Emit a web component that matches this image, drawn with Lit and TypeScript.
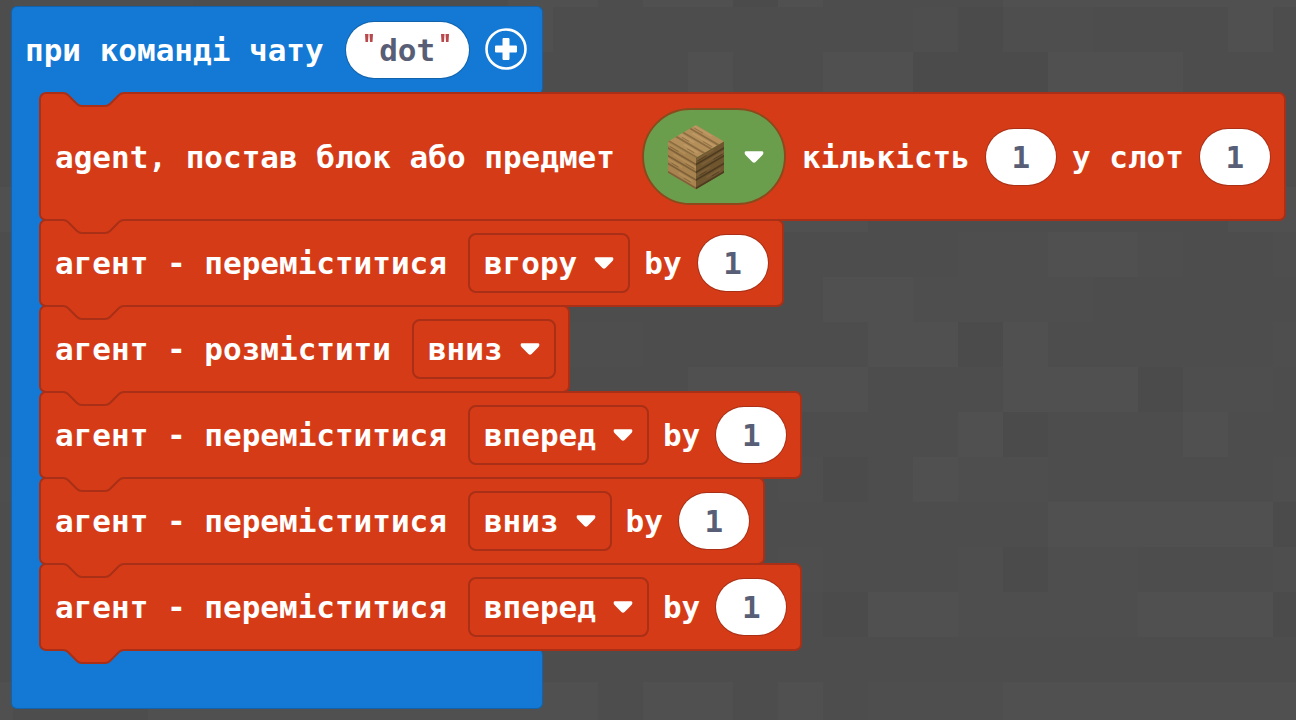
import { LitElement, html, svg, css } from "lit";
import { customElement, property } from "lit/decorators.js";

type Part =
  | { kind: "label"; text: string; lead?: boolean }
  | { kind: "number"; name: string; value: string }
  | { kind: "select"; name: string; value: string }
  | { kind: "item"; name: string };

const DIRECTIONS = ["вперед", "назад", "вліво", "вправо", "вгору", "вниз"];

const move = (direction: string): Part[] => [
  { kind: "label", text: "агент - переміститися", lead: true },
  { kind: "select", name: "напрямок", value: direction },
  { kind: "label", text: "by" },
  { kind: "number", name: "кроки", value: "1" },
];

const STATEMENTS: Part[][] = [
  [
    { kind: "label", text: "agent, постав блок або предмет", lead: true },
    { kind: "item", name: "дошки" },
    { kind: "label", text: "кількість" },
    { kind: "number", name: "кількість", value: "1" },
    { kind: "label", text: "у слот" },
    { kind: "number", name: "слот", value: "1" },
  ],
  move("вгору"),
  [
    { kind: "label", text: "агент - розмістити", lead: true },
    { kind: "select", name: "напрямок", value: "вниз" },
  ],
  move("вперед"),
  move("вниз"),
  move("вперед"),
];

// Stone texture of the workspace: [row, first column, column count, shade].
const TILE = 45;
const TILES: [number, number, number, "light" | "mild" | "dark"][] = [
  [-1, 0, 4, "mild"], [-1, 11, 2, "light"], [-1, 14, 2, "light"], [-1, 16, 1, "dark"], [-1, 17, 1, "light"], [-1, 22, 8, "light"],
  [0, 11, 1, "light"], [0, 20, 1, "mild"], [0, 21, 1, "dark"], [0, 22, 2, "mild"], [0, 27, 1, "light"],
  [1, 15, 1, "light"], [1, 18, 2, "light"], [1, 20, 3, "dark"], [1, 23, 3, "light"],
  [4, -1, 1, "light"], [4, 17, 2, "light"], [4, 27, 2, "light"],
  [5, 21, 2, "mild"], [5, 23, 2, "light"], [5, 25, 1, "mild"], [5, 28, 1, "mild"],
  [6, 18, 2, "light"], [6, 20, 4, "mild"],
  [7, 12, 2, "mild"], [7, 19, 2, "light"], [7, 21, 1, "dark"], [7, 22, 1, "light"], [7, 28, 1, "mild"],
  [8, 15, 4, "light"], [8, 22, 3, "light"], [8, 25, 1, "dark"], [8, 26, 2, "mild"],
  [9, 21, 1, "light"], [9, 22, 1, "dark"], [9, 26, 1, "light"],
  [10, -1, 1, "mild"], [10, 17, 1, "mild"], [10, 18, 1, "dark"], [10, 20, 1, "light"], [10, 21, 2, "mild"], [10, 28, 1, "mild"],
  [11, 23, 5, "light"], [11, 28, 1, "dark"],
  [12, 17, 1, "mild"], [12, 21, 1, "mild"], [12, 22, 1, "dark"], [12, 23, 2, "mild"], [12, 28, 1, "mild"],
  [13, 18, 1, "dark"], [13, 19, 2, "light"], [13, 21, 4, "mild"], [13, 25, 3, "light"], [13, 28, 1, "dark"],
  [15, -1, 1, "light"], [15, 3, 10, "light"], [15, 14, 2, "light"], [15, 17, 1, "light"], [15, 19, 3, "mild"], [15, 22, 8, "light"],
];

const arrow = html`<svg class="arrow" viewBox="0 0 20 12" aria-hidden="true">
  <path d="M2.2 0.300H17.800Q19.400 0.300 19.400 1.700Q19.400 3.200 18 4.500L11.600 11Q10 12.400 8.400 11L2 4.500Q0.600 3.200 0.600 1.700Q0.600 0.300 2.200 0.300Z" />
</svg>`;

// One face of the plank cube: seams across a 16-unit square.
const planks = (base: string, seam: string, shine: string) => svg`
  <rect width="16" height="16" fill=${base} />
  <path d="M0 1H10M3 5H16M0 9H8M6 13H14" stroke=${shine} stroke-width="1" />
  <path d="M0 3.300H16M0 7.300H16M0 11.300H16M0 15.500H16" stroke=${seam} stroke-width="1" />
  <path d="M1 2H6M10 6H15M2 10H6M9 14H13" stroke=${seam} stroke-width="0.400" />`;

const cube = html`<svg class="cube" viewBox="0 0 58 66" aria-hidden="true">
  <g transform="matrix(1.75 1.03 -1.75 1.03 29 1)">${planks("#b58f5a", "#8c6d42", "#be9963")}</g>
  <g transform="matrix(1.75 1.03 0 1.95 1 17.500)">${planks("#a8834f", "#7f6139", "#b28d58")}</g>
  <g transform="matrix(1.75 -1.03 0 1.95 29 34)">${planks("#70562f", "#4f3c20", "#7b5f39")}</g>
</svg>`;

@customElement("block-notch")
class BlockNotch extends LitElement {
  static styles = css`
    :host { position: absolute; left: 21px; top: -2px; width: 64px; height: 17px; pointer-events: none; }
    svg { display: block; width: 64px; height: 17px; }
    .fill { fill: var(--above); }
    .edge { fill: none; stroke: var(--edge); stroke-width: 2; }
  `;
  render() {
    return html`<svg viewBox="0 0 64 17" aria-hidden="true">
      <path class="fill" d="M0 0H64V1H62Q59 1 57 3L48 12.500Q46 14 43 14H20Q17 14 15 12.500L6 3Q4 1 1 1H0Z" />
      <path class="edge" d="M0 1H1Q4 1 6 3L15 12Q17 14 20 14H43Q46 14 48 12L57 3Q59 1 62 1H64" />
    </svg>`;
  }
}

@customElement("statement-block")
class StatementBlock extends LitElement {
  @property({ attribute: false }) parts: Part[] = [];

  static styles = css`
    :host {
      position: relative; display: flex; align-items: center; gap: 14px;
      width: max-content; padding: 12px 12px 12px 14px; margin-bottom: -2px;
      box-sizing: border-box; border: 2px solid var(--edge); border-radius: 7px;
      background: var(--agent);
    }
    .label { margin-right: 2px; white-space: pre; }
    .lead { margin-right: 7px; }
    input, select, button { box-sizing: border-box; margin: 0; font: inherit; }
    .number {
      width: 70px; height: 56px; margin-right: 2px; padding: 0; border: 0; border-radius: 28px;
      background: #fff; color: #575e75; text-align: center; box-shadow: 0 0 0 1px var(--edge);
    }
    .menu { position: relative; display: flex; align-items: center; }
    .menu select {
      appearance: none; field-sizing: content; height: 60px; padding: 0 51px 0 14px;
      border: 2px solid var(--edge); border-radius: 8px; background: transparent; color: #fff;
    }
    .menu select option { color: #333; }
    .arrow { width: 20px; height: 12px; fill: #fff; }
    .menu .arrow { position: absolute; right: 16px; pointer-events: none; }
    .item {
      display: flex; align-items: center; justify-content: space-between;
      width: 144px; height: 97px; margin: 2px 2px 2px 6px; padding: 0 20px 0 23px;
      border: 2px solid #8c4a1c; border-radius: 49px; background: #6b9e4c;
    }
    .cube { width: 58px; height: 66px; }
  `;

  renderPart(part: Part) {
    switch (part.kind) {
      case "label":
        return html`<span class=${part.lead ? "label lead" : "label"}>${part.text}</span>`;
      case "number":
        return html`<input class="number" type="text" inputmode="numeric" aria-label=${part.name} .value=${part.value} />`;
      case "select":
        return html`<span class="menu">
          <select aria-label=${part.name}>
            ${DIRECTIONS.map((d) => html`<option ?selected=${d === part.value}>${d}</option>`)}
          </select>${arrow}</span>`;
      case "item":
        return html`<button class="item" type="button" aria-label=${part.name}>${cube}${arrow}</button>`;
    }
  }

  render() {
    return html`<block-notch></block-notch>${this.parts.map((p) => this.renderPart(p))}`;
  }
}

const quote = html`<svg class="quote" viewBox="0 0 8 8" aria-hidden="true"><path d="M0 0H3.500L3 8H0.500ZM4.500 0H8L7.500 8H5Z" /></svg>`;

@customElement("app-root")
class AppRoot extends LitElement {
  static styles = css`
    :host {
      --event: #1379d5; --event-edge: #1263ab; --agent: #d63b18; --agent-edge: #a93016;
      display: block; position: relative; min-height: 100vh; box-sizing: border-box; overflow: hidden;
      padding: 6px 9px 10px 11px; background: #4d4d4d; color: #fff;
      font: bold 31px/40px "DejaVu Sans Mono", monospace;
    }
    .stone { position: absolute; left: 0; top: 0; width: 100%; height: 100%; }
    .light { fill: #505050; }
    .mild { fill: #4e4e4e; }
    .dark { fill: #4b4b4b; }
    .hat { position: relative; display: grid; grid-template-columns: max-content 1fr; }
    .head, .foot { box-sizing: border-box; border: 1px solid var(--event-edge); background: var(--event); }
    .head {
      display: flex; align-items: center; height: 88px; padding: 0 15px 2px 13px;
      border-bottom: 0; border-radius: 6px 6px 6px 0;
    }
    .label { margin-right: 22px; white-space: pre; }
    .text {
      display: flex; align-items: center; justify-content: center; height: 56px; width: 123px;
      margin-right: 16px; border-radius: 28px; background: #fff;
      box-shadow: 0 0 0 1px var(--event-edge);
    }
    .text input {
      box-sizing: border-box; width: 58px; height: 56px; margin: 0 5px; padding: 0; border: 0; background: none;
      font: inherit; color: #575e75; text-align: center;
    }
    .quote { width: 8px; height: 8px; margin-bottom: 24px; fill: #b8484c; }
    .add { padding: 0; border: 0; background: none; width: 42px; height: 42px; margin-bottom: 2px; }
    .add svg { display: block; width: 42px; height: 42px; }
    .stack {
      grid-column: 1 / -1; position: relative; z-index: 1; margin-top: -2px; padding-left: 28px;
      background: linear-gradient(to right, var(--event-edge) 1px, var(--event) 1px) 0 0 / 40px 100% no-repeat;
    }
    statement-block { --edge: var(--agent-edge); --above: var(--agent); }
    .first { --above: var(--event); }
    .foot { height: 60px; border-top: 0; border-radius: 0 6px 6px 6px; border-top-left-radius: 0; }
    .tail { --above: var(--agent); --edge: var(--agent-edge); left: 51px; top: 100%; }
  `;

  render() {
    return html`
      <svg class="stone" aria-hidden="true">
        ${TILES.map(([row, col, count, shade]) => svg`<rect class=${shade} x=${13 + col * TILE} y=${7 + row * TILE} width=${count * TILE} height=${TILE} />`)}
      </svg>
      <main class="hat">
        <div class="head">
          <label class="label" for="command">при команді чату</label>
          <span class="text">${quote}<input id="command" type="text" .value=${"dot"} />${quote}</span>
          <button class="add" type="button" aria-label="додати параметр">
            <svg viewBox="0 0 42 42" aria-hidden="true">
              <circle cx="21" cy="21" r="19.500" fill="none" stroke="#fff" stroke-width="2.600" />
              <path d="M18 10.500H24V18H31.500V24H24V31.500H18V24H10.500V18H18Z" fill="#fff" stroke="#fff" stroke-width="1" stroke-linejoin="round" />
            </svg>
          </button>
        </div>
        <div class="stack">
          ${STATEMENTS.map((parts, i) => html`<statement-block class=${i === 0 ? "first" : ""} .parts=${parts}></statement-block>`)}
          <block-notch class="tail"></block-notch>
        </div>
        <div class="foot"></div>
      </main>
    `;
  }
}
